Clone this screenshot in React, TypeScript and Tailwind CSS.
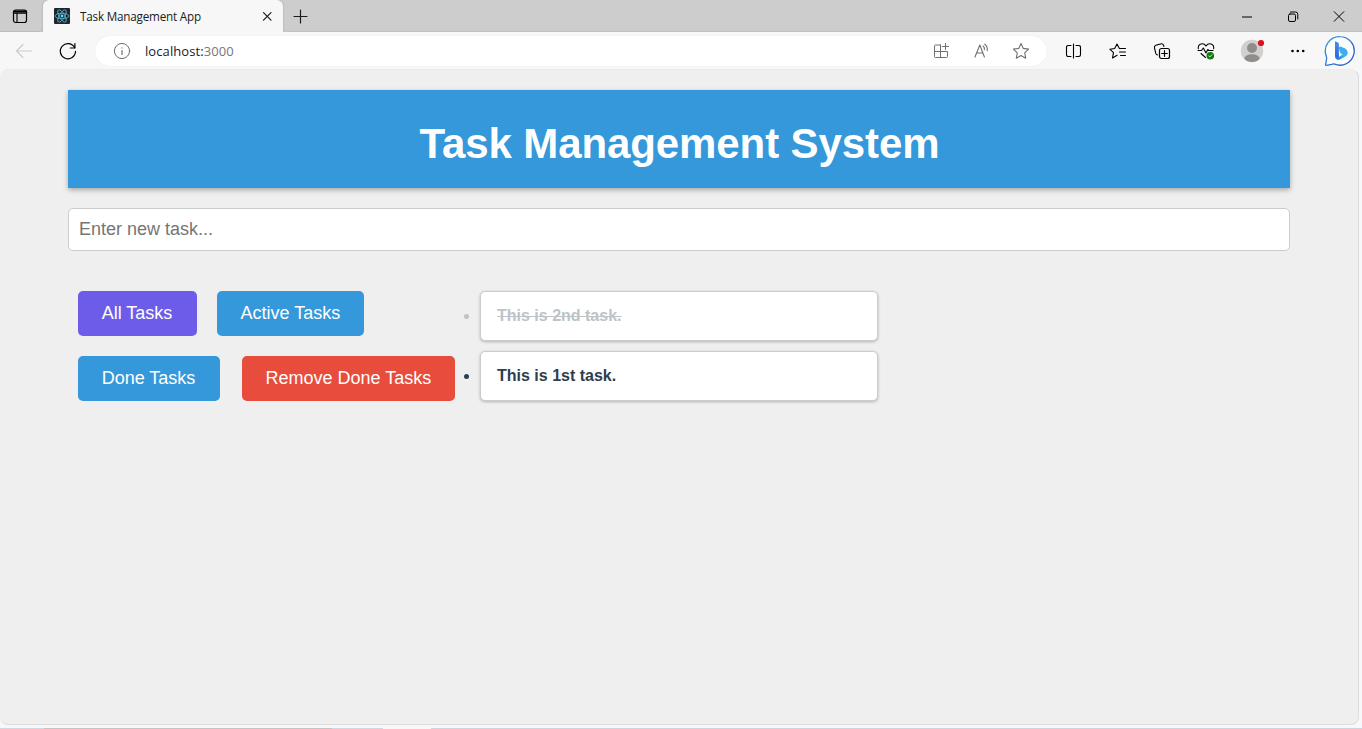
import type { ReactNode } from "react";

type IconProps = { children: ReactNode; className?: string; size?: number };

function Icon({ children, className = "text-[#1a1a1a]", size = 20 }: IconProps) {
  return (
    <svg
      width={size}
      height={size}
      viewBox={`0 0 ${size} ${size}`}
      fill="none"
      stroke="currentColor"
      strokeWidth="1.1"
      strokeLinecap="round"
      strokeLinejoin="round"
      className={`shrink-0 ${className}`}
    >
      {children}
    </svg>
  );
}

function TitleBar() {
  return (
    <div className="flex h-8 bg-[#cdcdcd]">
      <div className="flex h-8 w-[43px] items-center rounded-br-[5px] border-b border-[#bdbdbd] pl-[10px]">
        <Icon className="text-black">
          <rect x="3.5" y="4" width="13" height="12.5" rx="2.2" strokeWidth="1.2" />
          <path d="M4 5.3h12M3.5 7h13" strokeWidth="1.4" />
          <path d="M7 7.5v8.5" strokeWidth="1.1" />
        </Icon>
      </div>
      <div className="flex h-8 w-[240px] items-center rounded-t-[6px] bg-[#f7f7f7] pl-[11px] shadow-[0_0_2px_rgba(0,0,0,0.25)]">
        <svg width="16" height="16" viewBox="0 0 16 16" className="shrink-0">
          <rect width="16" height="16" rx="1" fill="#20262e" />
          <g fill="none" stroke="#58bcd4" strokeWidth="0.8">
            <ellipse cx="8" cy="8" rx="7" ry="2.7" />
            <ellipse cx="8" cy="8" rx="7" ry="2.7" transform="rotate(60 8 8)" />
            <ellipse cx="8" cy="8" rx="7" ry="2.7" transform="rotate(120 8 8)" />
          </g>
          <circle cx="8" cy="8" r="1.4" fill="#61dafb" />
        </svg>
        <span className="ml-[10px] w-[179px] text-[11.7px] leading-4 tracking-[-0.2px] text-[#1b1b1b]">
          Task Management App
        </span>
        <Icon className="text-[#1b1b1b]" size={16}>
          <path d="M4.5 4.7l7.500 7.500M12 4.700l-7.500 7.500" strokeWidth="1.2" />
        </Icon>
      </div>
      <div className="flex h-8 flex-1 items-center rounded-bl-[5px] border-b border-[#c0c0c0] pl-[7px]">
        <Icon className="text-[#1b1b1b]">
          <path d="M10.500 4v13M4 10.500h13" strokeWidth="1.200" />
        </Icon>
        <div className="ml-auto flex items-center gap-[26px] pr-[13px]">
          <Icon className="text-black">
            <path d="M5 11h10" strokeLinecap="butt" strokeWidth="1" />
          </Icon>
          <Icon className="text-black">
            <rect x="5.500" y="8" width="7" height="7.500" rx="1.500" strokeWidth="1" />
            <path d="M7.500 6h5a2.300 2.300 0 0 1 2.300 2.300v4.700" strokeWidth="1" />
          </Icon>
          <Icon className="text-black">
            <path d="M5.200 5.700l9.600 9.600M14.800 5.700l-9.600 9.600" strokeWidth="1" />
          </Icon>
        </div>
      </div>
    </div>
  );
}

function BingLogo() {
  return (
    <svg width="32" height="32" viewBox="0 0 32 32" className="shrink-0">
      <defs>
        <linearGradient id="bubble" x1="0" y1="0" x2="1" y2="1">
          <stop offset="0" stopColor="#2f9ae0" />
          <stop offset="1" stopColor="#2a55c4" />
        </linearGradient>
        <linearGradient id="stem" x1="0" y1="0" x2="0" y2="1">
          <stop offset="0" stopColor="#4b8fe8" />
          <stop offset="1" stopColor="#2466d8" />
        </linearGradient>
        <linearGradient id="bowl" x1="1" y1="0" x2="0" y2="1">
          <stop offset="0" stopColor="#3f9fe8" />
          <stop offset="0.5" stopColor="#3cb4ee" />
          <stop offset="1" stopColor="#1f6fe0" />
        </linearGradient>
      </defs>
      <path
        d="M16.200 1.600a14.300 14.300 0 1 1-5.500 27.600c-1.200-.5-1.800-.4-3 .1L2.300 30.400c-.6.1-.9-.3-.7-.9l1-5.600c.2-1.200.1-1.600-.3-2.800A14.300 14.300 0 0 1 16.200 1.600z"
        fill="#fbfdff"
        stroke="url(#bubble)"
        strokeWidth="1.300"
      />
      <path d="M11 6.300l2.400.9c1 .4 1.500 1 1.500 2v12.300l1.500 2.500c-2.800 1.500-5.400-.3-5.400-2.900z" fill="url(#stem)" />
      <path
        d="M16.600 11.500l3.400 1.500c2.400 1 3.600 2.600 3.600 4.700 0 1.700-.8 3-2.200 3.800l-5.100 2.800c-2.500 1.100-4.900-.1-5.200-2.300 1.200 1 2.600.8 3.900-.1l3.400-2.300-1.100-.9c-.8-.4-1-.8-1.300-1.500l-1-3.200c-.4-1.600.3-2.900 1.600-2.500z"
        fill="url(#bowl)"
      />
    </svg>
  );
}

function Toolbar() {
  return (
    <div className="flex h-[37px] items-center bg-[#f7f7f7] pl-[14px]">
      <Icon className="text-[#cbcbcb]">
        <path d="M17.500 10H2.500M9 3.500L2.500 10 9 16.500" />
      </Icon>
      <Icon className="ml-6 text-black">
        <path d="M16.700 6.800A7.600 7.600 0 1 0 17.500 10.300" strokeWidth="1.200" />
        <path d="M16.900 2.500v4.500h-4.600" strokeWidth="1.200" />
      </Icon>
      <div className="ml-[17px] flex h-[30px] w-[952px] items-center rounded-full bg-white pr-4 pl-[17px] shadow-[0_0_1px_rgba(0,0,0,0.12)]">
        <Icon className="text-[#6f6f6f]">
          <circle cx="10" cy="10" r="7.600" strokeWidth="1" />
          <path d="M10 9.500v4M10 6.800v.1" strokeWidth="1.200" />
        </Icon>
        <span className="ml-[13px] text-[13px] leading-5 tracking-[0.09px] text-[#1b1b1b]">
          localhost:<span className="text-[#767676]">3000</span>
        </span>
        <div className="ml-auto flex items-center gap-5">
          <Icon className="text-[#707070]">
            <path d="M9.500 4h-5a1 1 0 0 0-1 1V15.500a1 1 0 0 0 1 1h11a1 1 0 0 0 1-1v-5h-13M9.500 4v12.500M14.500 2.500v6M11.500 5.500h6" strokeWidth="1" />
          </Icon>
          <Icon className="text-[#707070]">
            <path d="M4 16L8.800 4l4.600 12M5.700 12h6.100" />
            <path d="M12 5q1.800 1.300 1.400 3.800M13.800 3.200q3.200 2.600 2.400 6.400" />
          </Icon>
          <Icon className="text-[#707070]">
            <path d="M10 2.500l2.300 4.900 5.300.7-3.900 3.700 1 5.400-4.700-2.700-4.700 2.700 1-5.400-3.900-3.700 5.300-.7z" />
          </Icon>
        </div>
      </div>
      <div className="ml-[17px] flex items-center gap-6">
        <Icon className="text-black">
          <path d="M7 4.500H4.200a1.700 1.700 0 0 0-1.700 1.700v7.600a1.700 1.700 0 0 0 1.700 1.700H7M12 4.500h2.800a1.700 1.700 0 0 1 1.700 1.700v7.600a1.700 1.700 0 0 1-1.700 1.700H12M9.500 3v14" />
        </Icon>
        <Icon className="text-black">
          <path d="M12.200 7.500h-.8L9 3 6.700 7.500l-4.900.7 3.700 3.500-1 5.200 4.600-2.600M12.500 7.500h5M11.500 11h6M12.500 14.500h5" />
        </Icon>
        <Icon className="text-black">
          <path d="M5.500 14c-.9-.2-1.500-.8-1.800-1.800L2.500 6.800c-.3-1.200.3-2.200 1.400-2.600l4.700-1.300c1.300-.4 2.400.1 2.900 1.300l.4 1.300" />
          <rect x="7.500" y="7.500" width="10" height="10" rx="2" strokeWidth="1.200" />
          <path d="M12.500 9.700v5.600M9.700 12.500h5.600" strokeWidth="1.200" />
        </Icon>
        <Icon className="text-black">
          <path d="M2.300 7.700C1.700 2.500 7.500 1.300 10 5c2.500-3.700 8.300-2.500 7.700 2.700M2 9.500h3.500l1.800-2.500L10 12l1.800-3.500 1 1H17M5 12.500l4.500 4" />
          <circle cx="14.300" cy="14.800" r="3.800" fill="#107c10" stroke="none" />
          <path d="M12.800 15l1.100.9 2-2.200" stroke="white" strokeWidth=".8" />
        </Icon>
      </div>
      <svg width="26" height="26" viewBox="0 0 26 26" className="ml-[23px] shrink-0">
        <defs>
          <clipPath id="avatar">
            <circle cx="13" cy="13" r="11" />
          </clipPath>
        </defs>
        <circle cx="13" cy="13" r="11.200" fill="#d2d0ce" />
        <g clipPath="url(#avatar)" fill="#8f8d8b">
          <circle cx="13" cy="10" r="5" />
          <ellipse cx="13" cy="20.500" rx="7.500" ry="4.200" />
        </g>
        <circle cx="22" cy="5" r="3.100" fill="#e20f1c" />
      </svg>
      <Icon className="ml-[23px] text-black">
        <g fill="currentColor" stroke="none">
          <circle cx="4.500" cy="10" r="1.300" />
          <circle cx="9.800" cy="10" r="1.300" />
          <circle cx="15.200" cy="10" r="1.300" />
        </g>
      </Icon>
      <div className="ml-4">
        <BingLogo />
      </div>
    </div>
  );
}

const buttonBase =
  "h-[45px] rounded-[5px] pr-[24.5px] pl-[23.5px] pb-px text-[18px] leading-[21px] whitespace-nowrap text-white";

const tasks = [
  { id: 2, text: "This is 2nd task.", done: true },
  { id: 1, text: "This is 1st task.", done: false },
];

function TaskPage() {
  return (
    <main className="h-[656px] w-[1359px] rounded-[8px] border border-l-0 border-[#dcdcdc] border-t-[#ececec] bg-[#efefef] pt-5 pl-[68px] font-['Liberation_Sans',Arial,sans-serif]">
      <header className="flex h-[98px] w-[1222px] justify-center bg-[#3498db] pt-[30px] shadow-[0_2px_5px_rgba(0,0,0,0.3)]">
        <h1 className="pl-px text-[42px] leading-[48px] font-bold tracking-[-0.1px] text-white">
          Task Management System
        </h1>
      </header>
      <input
        type="text"
        placeholder="Enter new task..."
        className="mt-5 block h-[43px] w-[1222px] rounded-[5px] border border-[#ccc] bg-white px-[10px] pb-px text-[18px] placeholder:text-[#757575]"
      />
      <div className="mt-10 flex">
        <div className="flex w-[387px] shrink-0 flex-col gap-5 pl-[10px]">
          <div className="flex gap-5">
            <button className={`${buttonBase} w-[119px] bg-[#6c5ce7]`}>All Tasks</button>
            <button className={`${buttonBase} w-[147px] bg-[#3498db]`}>Active Tasks</button>
          </div>
          <div className="flex gap-[22px]">
            <button className={`${buttonBase} w-[142px] bg-[#3498db]`}>Done Tasks</button>
            <button className={`${buttonBase} w-[213px] bg-[#e74c3c]`}>Remove Done Tasks</button>
          </div>
        </div>
        <ul className="flex flex-col gap-[10px] pl-[9px] text-[16px] leading-[18px] font-bold">
          {tasks.map((task) => (
            <li
              key={task.id}
              className={`flex items-center ${task.done ? "text-[#bdc3c7]" : "text-[#2c3e50]"}`}
            >
              <span className="mt-px mr-[11px] size-[5px] rounded-full bg-current" />
              <span
                className={`h-[50px] w-[398px] rounded-[5px] border border-[#ccc] bg-white px-4 pt-[15px] shadow-[0_1px_3px_rgba(0,0,0,0.25)] ${task.done ? "line-through" : ""}`}
              >
                {task.text}
              </span>
            </li>
          ))}
        </ul>
      </div>
    </main>
  );
}

export default function App() {
  return (
    <div className="flex h-[729px] w-[1362px] flex-col overflow-hidden bg-[#f7f8fa] font-['Open_Sans','Noto_Sans',sans-serif]">
      <TitleBar />
      <Toolbar />
      <TaskPage />
      <div className="mt-[3px] flex h-px">
        <div className="w-11 bg-[#ccd8e2]" />
        <div className="w-[288px] bg-[#c4c4c4]" />
        <div className="w-[51px] bg-[#ccd8e2]" />
        <div className="w-12 bg-[#f7f7f7]" />
        <div className="flex-1 bg-[#ccd4e0]" />
      </div>
    </div>
  );
}
